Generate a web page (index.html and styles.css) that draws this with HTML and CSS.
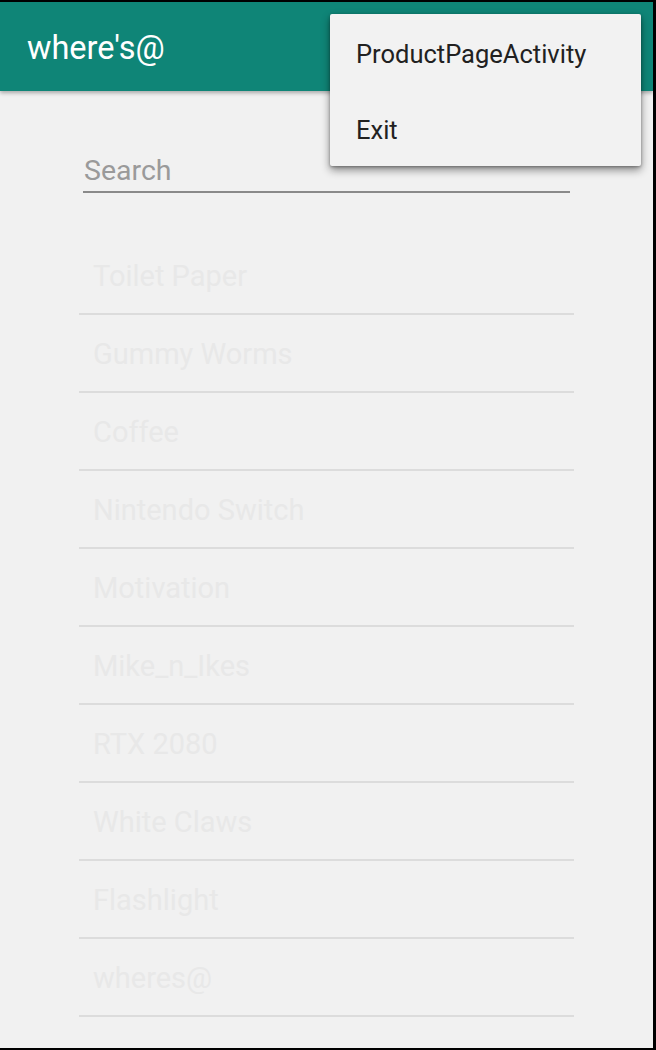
FILE: index.html
```html
<!DOCTYPE html>
<html>
<head>
<meta charset="utf-8">
<link rel="stylesheet" href="styles.css">
</head>
<body>
<div class="screen">
  <header class="toolbar">
    <span class="title">where's@</span>
  </header>
  <main class="content">
    <div class="search">
      <span class="search-hint">Search</span>
    </div>
    <ul class="list">
      <li class="item">Toilet Paper</li>
      <li class="item">Gummy Worms</li>
      <li class="item">Coffee</li>
      <li class="item">Nintendo Switch</li>
      <li class="item">Motivation</li>
      <li class="item">Mike_n_Ikes</li>
      <li class="item">RTX 2080</li>
      <li class="item">White Claws</li>
      <li class="item">Flashlight</li>
      <li class="item">wheres@</li>
    </ul>
  </main>
  <div class="menu">
    <div class="menu-item">ProductPageActivity</div>
    <div class="menu-item">Exit</div>
  </div>
</div>
</body>
</html>
```

FILE: styles.css
```css
html, body {
  margin: 0;
  padding: 0;
  background: #000;
}
.screen {
  position: relative;
  width: 656px;
  height: 1050px;
  box-sizing: border-box;
  border-top: 2px solid #000;
  border-right: 3px solid #000;
  border-bottom: 2px solid #000;
  background: #f1f1f1;
  overflow: hidden;
  font-family: Roboto, "Noto Sans", sans-serif;
}
.toolbar {
  height: 89px;
  background: #0f8577;
  display: flex;
  align-items: center;
  padding-left: 27px;
  box-shadow: 0 2px 4px rgba(0,0,0,0.3);
  position: relative;
  z-index: 1;
}
.title {
  color: #fff;
  font-size: 32.5px;
  margin-top: 3px;
}
.content {
  padding-top: 63px;
}
.search {
  margin-left: 83px;
  width: 487px;
  border-bottom: 2px solid #8a8a8a;
  padding-bottom: 3px;
}
.search-hint {
  display: block;
  color: #9a9a9a;
  font-size: 28.5px;
  line-height: 34px;
  padding-left: 1px;
}
.list {
  list-style: none;
  margin: 44px 0 0 79px;
  padding: 0;
  width: 495px;
}
.item {
  box-sizing: border-box;
  height: 78px;
  padding-top: 2px;
  padding-left: 14px;
  border-bottom: 2px solid #dcdcdc;
  display: flex;
  align-items: center;
  color: #e8e8e8;
  font-size: 29px;
}
.menu {
  position: absolute;
  left: 330px;
  top: 12px;
  width: 311px;
  height: 152px;
  padding-top: 2px;
  box-sizing: border-box;
  background: #f2f2f2;
  border-radius: 2px;
  box-shadow: 0 4px 8px rgba(0,0,0,0.45), 0 1px 3px rgba(0,0,0,0.3);
  z-index: 2;
  display: flex;
  flex-direction: column;
}
.menu-item {
  flex: none;
  height: 76px;
  display: flex;
  align-items: center;
  padding-left: 26px;
  color: #212121;
  font-size: 25.5px;
}
```
